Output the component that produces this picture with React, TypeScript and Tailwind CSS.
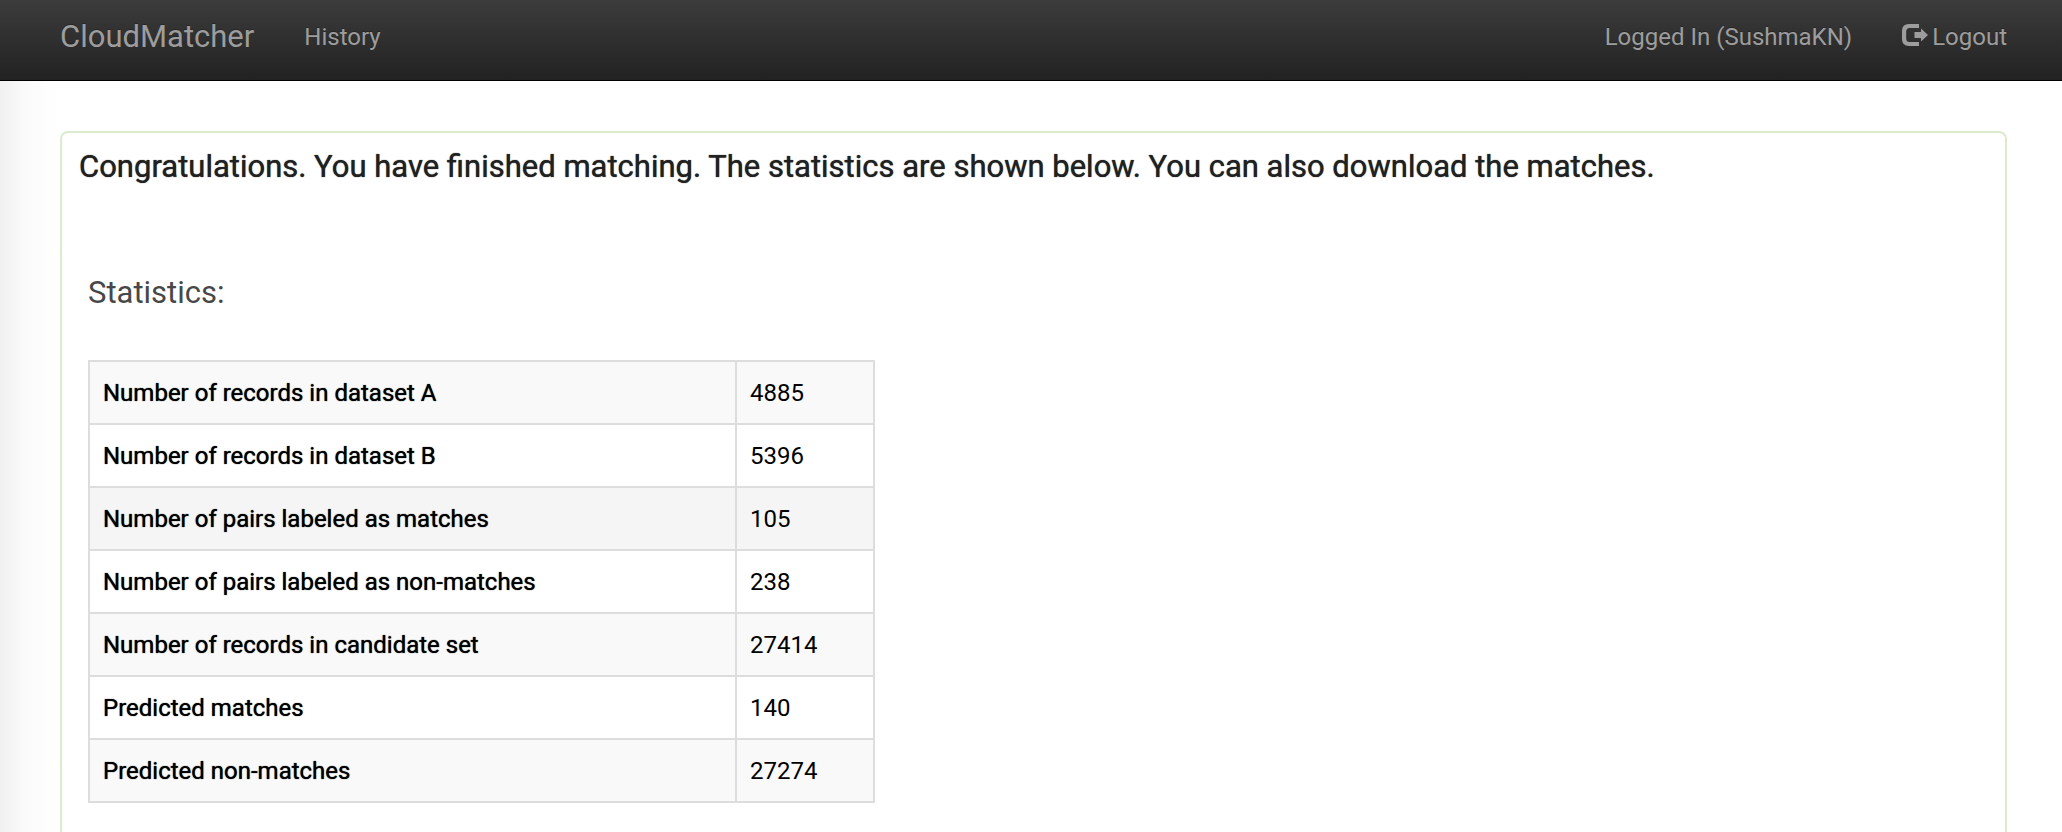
const statistics: [string, string][] = [
  ["Number of records in dataset A", "4885"],
  ["Number of records in dataset B", "5396"],
  ["Number of pairs labeled as matches", "105"],
  ["Number of pairs labeled as non-matches", "238"],
  ["Number of records in candidate set", "27414"],
  ["Predicted matches", "140"],
  ["Predicted non-matches", "27274"],
];

function LogoutIcon() {
  return (
    <svg viewBox="0 0 26 24" className="mb-1 h-6 w-[26px]" fill="currentColor" aria-hidden="true">
      <path d="M17 1H7Q0 1 0 8V16Q0 23 7 23H17V19H7.500Q4.200 19 4.200 15.500V8.500Q4.200 5 7.500 5H17Z" />
      <path d="M12.500 9H19V5.500L26 12L19 18.500V15H12.500Z" />
    </svg>
  );
}

function Navbar() {
  return (
    <nav className="flex h-[81px] items-center border-b border-black bg-linear-to-b from-[#3c3c3c] to-[#222] pr-[55px] pb-[6px] pl-[60px] text-2xl text-[#9d9d9d] [text-shadow:0_-1px_0_rgba(0,0,0,0.25)]">
      <a href="#" className="text-[31px]">CloudMatcher</a>
      <a href="#history" className="ml-[50px]">History</a>
      <a href="#account" className="ml-auto">Logged In (SushmaKN)</a>
      <a href="#logout" className="ml-[50px] flex items-center gap-1">
        <LogoutIcon />
        Logout
      </a>
    </nav>
  );
}

export default function App() {
  return (
    <div className="flex min-h-screen flex-col bg-white font-[Roboto,sans-serif]">
      <Navbar />
      <main className="flex grow flex-col bg-[linear-gradient(to_right,#f0f0f0,#fafafa_24px,#fff_58px)] pt-[50px] pr-[55px] pl-[60px]">
        <section className="grow rounded-t-lg border-2 border-b-0 border-[#dcebcf] bg-white px-[17px] pt-3">
          <h1 className="text-[31px] leading-[44px] text-[#212121] [text-shadow:0_0_1px_#212121]">
            Congratulations. You have finished matching. The statistics are shown below. You can also download the matches.
          </h1>
          <div className="px-[9px] pt-[82px]">
            <h2 className="text-[31px] leading-[44px] text-[#484848]">Statistics:</h2>
            <table className="mt-[45px] w-[787px] border-collapse text-2xl text-black">
              <tbody>
                {statistics.map(([label, value]) => (
                  <tr key={label} className="h-[63px] odd:bg-[#f9f9f9] nth-3:bg-[#f5f5f5]">
                    <th scope="row" className="border-2 border-[#ddd] px-[13px] text-left font-normal [text-shadow:0_0_1px_#000]">{label}</th>
                    <td className="w-[138px] border-2 border-[#ddd] px-[13px]">{value}</td>
                  </tr>
                ))}
              </tbody>
            </table>
          </div>
        </section>
      </main>
    </div>
  );
}
